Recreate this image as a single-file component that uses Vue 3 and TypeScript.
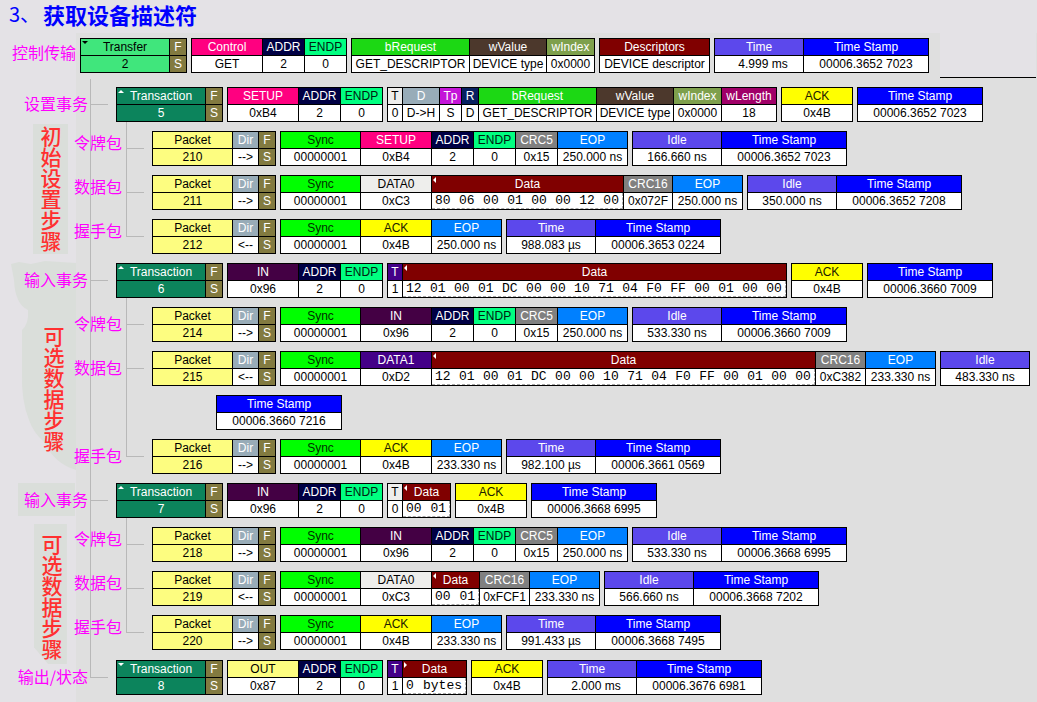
<script setup lang="ts">
interface Field {
  kind: string
  head: string
  value: string
  size?: string
  arrow?: string
}
type Block = Field[]
interface Packet {
  label: string
  blocks: Block[]
  more?: Block[]
}
interface Transaction {
  label: string
  shaded?: boolean
  step?: string
  place?: string
  blocks: Block[]
  packets: Packet[]
}

const heads: Record<string, string> = {
  flag: 'F', dir: 'Dir', sync: 'Sync', addr: 'ADDR', endp: 'ENDP', crc5: 'CRC5', crc16: 'CRC16',
  eop: 'EOP', ack: 'ACK', stamp: 'Time Stamp', time: 'Time', idle: 'Idle', setup: 'SETUP', in: 'IN',
  out: 'OUT', data0: 'DATA0', data1: 'DATA1', control: 'Control', request: 'bRequest',
  wvalue: 'wValue', windex: 'wIndex', wlength: 'wLength', desc: 'Descriptors', packet: 'Packet',
  transfer: 'Transfer', transaction: 'Transaction', t0: 'T', t1: 'T', d: 'D', tp: 'Tp', r: 'R', data: 'Data',
}

const arrows: Record<string, string> = {
  up: 'M0 4 L3 1 L6 4 Z',
  down: 'M0 1 L6 1 L3 4 Z',
  left: 'M0 3 L3 0 L3 6 Z',
  right: 'M0 0 L3 3 L0 6 Z',
}

const f = (kind: string, value: string, size?: string, arrow?: string): Field => ({
  kind, value, size, arrow, head: heads[kind],
})
const data = (value: string, size: string, arrow = 'left') => f('data', value, size, arrow)
const lead = (no: string, dir: string): Block => [f('packet', no), f('dir', dir), f('flag', 'S')]
const txn = (no: string, arrow = 'up'): Block => [f('transaction', no, '', arrow), f('flag', 'S')]
const addr = (kind: string, value: string): Block => [f(kind, value), f('addr', '2'), f('endp', '0')]
const sync = f('sync', '00000001')
const timing = (kind: string, value: string, stamp: string): Block => [f(kind, value), f('stamp', stamp)]
const request: Block = [f('request', 'GET_DESCRIPTOR'), f('wvalue', 'DEVICE type'), f('windex', '0x0000')]

const token = (label: string, no: string, pid: string, code: string, idle: string, stamp: string): Packet => ({
  label,
  blocks: [
    lead(no, '-->'),
    [sync, ...addr(pid, code), f('crc5', '0x15'), f('eop', '250.000 ns')],
    timing('idle', idle, stamp),
  ],
})
const handshake = (no: string, dir: string, eop: string, time: string, stamp: string): Packet => ({
  label: '握手包',
  blocks: [lead(no, dir), [sync, f('ack', '0x4B'), f('eop', eop)], timing('time', time, stamp)],
})

const longData = '12 01 00 01 DC 00 00 10 71 04 F0 FF 00 01 00 00'

const transfer: Block[] = [
  [f('transfer', '2', '', 'down'), f('flag', 'S')],
  addr('control', 'GET'),
  request,
  [f('desc', 'DEVICE descriptor')],
  timing('time', '4.999 ms', '00006.3652 7023'),
]

const transactions: Transaction[] = [
  {
    label: '设置事务',
    step: '初始设置步骤',
    place: 'first',
    blocks: [
      txn('5'),
      addr('setup', '0xB4'),
      [f('t0', '0'), f('d', 'D->H'), f('tp', 'S'), f('r', 'D'), ...request, f('wlength', '18')],
      [f('ack', '0x4B')],
      [f('stamp', '00006.3652 7023')],
    ],
    packets: [
      token('令牌包', '210', 'setup', '0xB4', '166.660 ns', '00006.3652 7023'),
      {
        label: '数据包',
        blocks: [
          lead('211', '-->'),
          [sync, f('data0', '0xC3'), data('80 06 00 01 00 00 12 00', 'mid'), f('crc16', '0x072F', 'tight'), f('eop', '250.000 ns')],
          timing('idle', '350.000 ns', '00006.3652 7208'),
        ],
      },
      handshake('212', '<--', '250.000 ns', '988.083 µs', '00006.3653 0224'),
    ],
  },
  {
    label: '输入事务',
    step: '可选数据步骤',
    place: 'second',
    blocks: [
      txn('6'),
      addr('in', '0x96'),
      [f('t1', '1'), data(longData, 'long')],
      [f('ack', '0x4B')],
      [f('stamp', '00006.3660 7009')],
    ],
    packets: [
      token('令牌包', '214', 'in', '0x96', '533.330 ns', '00006.3660 7009'),
      {
        label: '数据包',
        blocks: [
          lead('215', '<--'),
          [sync, f('data1', '0xD2'), data(longData, 'long'), f('crc16', '0xC382'), f('eop', '233.330 ns')],
          [f('idle', '483.330 ns')],
        ],
        more: [[f('stamp', '00006.3660 7216')]],
      },
      handshake('216', '-->', '233.330 ns', '982.100 µs', '00006.3661 0569'),
    ],
  },
  {
    label: '输入事务',
    shaded: true,
    step: '可选数据步骤',
    place: 'third',
    blocks: [
      txn('7'),
      addr('in', '0x96'),
      [f('t0', '0'), data('00 01', 'short')],
      [f('ack', '0x4B')],
      [f('stamp', '00006.3668 6995')],
    ],
    packets: [
      token('令牌包', '218', 'in', '0x96', '533.330 ns', '00006.3668 6995'),
      {
        label: '数据包',
        blocks: [
          lead('219', '<--'),
          [sync, f('data0', '0xC3'), data('00 01', 'short'), f('crc16', '0xFCF1'), f('eop', '233.330 ns')],
          timing('idle', '566.660 ns', '00006.3668 7202'),
        ],
      },
      handshake('220', '-->', '233.330 ns', '991.433 µs', '00006.3668 7495'),
    ],
  },
  {
    label: '输出/状态',
    blocks: [
      txn('8', 'down'),
      addr('out', '0x87'),
      [f('t1', '1'), data('0 bytes', 'bytes', 'right')],
      [f('ack', '0x4B')],
      timing('time', '2.000 ms', '00006.3676 6981'),
    ],
    packets: [],
  },
]
</script>

<template>
  <main class="page">
    <h1 class="title"><span class="number">3、</span>获取设备描述符</h1>

    <div class="row">
      <span class="label transfer-label">控制传输</span>
      <table v-for="(block, b) in transfer" :key="b" class="block">
        <thead>
          <tr>
            <th v-for="(c, i) in block" :key="i" scope="col" :class="['cell', c.kind, c.size]">
              <svg v-if="c.arrow" class="arrow" width="6" height="6" viewBox="0 0 6 6" aria-hidden="true"><path :d="arrows[c.arrow]" /></svg>{{ c.head }}
            </th>
          </tr>
        </thead>
        <tbody>
          <tr>
            <td v-for="(c, i) in block" :key="i" :class="['cell', c.kind + '-value', { late: c.value.endsWith(' ms') }]">{{ c.value }}</td>
          </tr>
        </tbody>
      </table>
      <span class="rule"></span>
    </div>

    <div class="tree">
      <section v-for="(t, n) in transactions" :key="n" :class="['transaction-group', t.place]">
        <svg v-if="t.place === 'second'" class="patch" width="65" height="210" viewBox="0 0 65 210" aria-hidden="true">
          <path d="M0 4 L8 2 L20 4 L34 1 L65 3 V210 Q44 204 33 182 Q22 172 18 160 Q10 140 11 112 L11 70 Q18 64 17 50 Q4 44 3 20 Z" />
        </svg>
        <div class="row">
          <span :class="['label', 'transaction-label', { shaded: t.shaded }]">{{ t.label }}</span>
          <i class="twig"></i>
          <table v-for="(block, b) in t.blocks" :key="b" class="block">
            <thead>
              <tr>
                <th v-for="(c, i) in block" :key="i" scope="col" :class="['cell', c.kind, c.size]">
                  <svg v-if="c.arrow" class="arrow" width="6" height="6" viewBox="0 0 6 6" aria-hidden="true"><path :d="arrows[c.arrow]" /></svg>{{ c.head }}
                </th>
              </tr>
            </thead>
            <tbody>
              <tr>
                <td v-for="(c, i) in block" :key="i" :class="['cell', c.kind + '-value', { late: c.value.endsWith(' ms') }]">
                  <div v-if="c.kind === 'data'" class="bytes-line"><span v-for="(x, k) in c.value.split(' ')" :key="k">{{ x }}</span></div>
                  <template v-else>{{ c.value }}</template>
                </td>
              </tr>
            </tbody>
          </table>
        </div>

        <div v-if="t.step" class="step">{{ t.step }}</div>

        <div v-if="t.packets.length" class="packets">
          <article v-for="(p, m) in t.packets" :key="m" class="packet-item">
            <div class="row">
              <span class="label packet-label">{{ p.label }}</span>
              <i class="twig"></i>
              <table v-for="(block, b) in p.blocks" :key="b" class="block">
                <thead>
                  <tr>
                    <th v-for="(c, i) in block" :key="i" scope="col" :class="['cell', c.kind, c.size]">
                      <svg v-if="c.arrow" class="arrow" width="6" height="6" viewBox="0 0 6 6" aria-hidden="true"><path :d="arrows[c.arrow]" /></svg>{{ c.head }}
                    </th>
                  </tr>
                </thead>
                <tbody>
                  <tr>
                    <td v-for="(c, i) in block" :key="i" :class="['cell', c.kind + '-value']">
                      <div v-if="c.kind === 'data'" class="bytes-line"><span v-for="(x, k) in c.value.split(' ')" :key="k">{{ x }}</span></div>
                      <template v-else>{{ c.value }}</template>
                    </td>
                  </tr>
                </tbody>
              </table>
            </div>
            <div v-if="p.more" class="row more">
              <table v-for="(block, b) in p.more" :key="b" class="block">
                <thead>
                  <tr><th v-for="(c, i) in block" :key="i" scope="col" :class="['cell', c.kind]">{{ c.head }}</th></tr>
                </thead>
                <tbody>
                  <tr><td v-for="(c, i) in block" :key="i" class="cell">{{ c.value }}</td></tr>
                </tbody>
              </table>
            </div>
          </article>
        </div>
      </section>
    </div>
  </main>
</template>

<style>
body {
  margin: 0;
  background: #e4e2e6;
}
</style>

<style scoped>
.page {
  box-sizing: border-box;
  min-height: 100vh;
  background: linear-gradient(#dfdfdf, #dfdfdf) 76px 33px no-repeat, #e4e2e6;
  font: 12px/16px "Liberation Sans", "Noto Sans CJK SC", sans-serif;
  color: #000;
}
.title {
  display: flex;
  align-items: center;
  box-sizing: border-box;
  height: 38px;
  margin: 0;
  padding: 0 0 10px 9px;
  font: bold 22px/28px "Noto Sans CJK SC", sans-serif;
  color: #0000ff;
}
.number {
  width: 34px;
  font-size: 20px;
  font-weight: normal;
}
.row {
  display: flex;
  gap: 4px;
}
.label {
  box-sizing: border-box;
  display: flex;
  flex: none;
  align-items: center;
  justify-content: flex-end;
  padding-bottom: 4px;
  white-space: nowrap;
  font: 16px/20px "Noto Sans CJK SC", sans-serif;
  color: #ff00ff;
}
.transfer-label {
  width: 76px;
  padding-bottom: 8px;
}
.transaction-label {
  width: 88px;
}
.packet-label {
  width: 50px;
}
.first .packet-label,
.third .packet-label {
  padding-bottom: 14px;
}
.shaded {
  background: linear-gradient(#dadeda, #dadeda) 18px 0 / 57px 33px no-repeat;
}
.rule {
  flex: 1;
  margin: -5px 1px -5px 7px;
  border-bottom: 1px solid #000;
  background: #e4e2e6;
}
.tree {
  position: relative;
  isolation: isolate;
  margin-top: 6px;
  padding-top: 8px;
}
.tree::before {
  content: "";
  position: absolute;
  z-index: -1;
  top: 0;
  bottom: 18px;
  left: 90px;
  width: 1px;
  background: #b8b8b8;
}
.twig {
  flex: none;
  align-self: center;
  width: 18px;
  height: 1px;
  margin: 0 4px 0 -2px;
  background: #b8b8b8;
}
.transaction-group {
  position: relative;
  display: grid;
  grid-template-columns: 72px 1fr;
  margin-bottom: 9px;
}
.transaction-group:last-child {
  margin-bottom: 0;
}
.third {
  margin-bottom: 10px;
}
.transaction-group > .row {
  grid-column: 1 / -1;
}
.patch {
  position: absolute;
  z-index: -2;
  top: -3px;
  left: 11px;
  fill: #dadeda;
}
.step {
  box-sizing: border-box;
  align-self: end;
  width: 35px;
  margin-left: 33px;
  padding: 2px 0;
  background: #dadeda;
  writing-mode: vertical-rl;
  font: 500 21px/35px "Noto Sans CJK SC", sans-serif;
  color: #ff3030;
}
.second .step {
  margin-left: 36px;
  padding-bottom: 22px;
  background: none;
}
.third .step {
  margin: 0 0 -14px 34px;
  padding: 10px 0 4px;
  clip-path: polygon(0 0, 94% 0, 94% 100%, 40% 100%, 0 88%);
}
.packets {
  position: relative;
}
.packets::before {
  content: "";
  position: absolute;
  top: 0;
  bottom: 17px;
  left: 54px;
  width: 1px;
  background: #b8b8b8;
}
.packet-item {
  padding-top: 9px;
}
.packet-item .twig {
  margin-left: 0;
}
.more {
  margin: 9px 0 0 144px;
}
.block {
  flex: none;
  border: solid #000;
  border-width: 1px 0 0 1px;
  border-spacing: 0;
}
.cell {
  position: relative;
  box-sizing: border-box;
  height: 17px;
  padding: 0;
  border: solid #000;
  border-width: 0 1px 1px 0;
  text-align: center;
  white-space: nowrap;
  font-weight: normal;
  line-height: 16px;
}
th.cell {
  color: #fff;
}
td.cell {
  background: #fff;
}
td.late {
  padding-left: 8px;
}
.arrow {
  position: absolute;
  top: 1px;
  left: 1px;
  fill: currentColor;
}
.bytes-line {
  box-sizing: border-box;
  display: flex;
  justify-content: space-between;
  height: 16px;
  padding: 0 3px;
  border: dashed #a8a8a8;
  border-width: 0 1px 1px 0;
  font: 13px/16px "Liberation Mono", monospace;
}
th.transfer, th.transaction { width: 89px; }
th.transfer, td.transfer-value { background: #40e67c; color: #000; }
th.transaction, td.transaction-value { background: #0c845c; color: #fff; }
th.flag { width: 17px; }
th.flag, td.flag-value { background: #827a40; color: #fff; }
th.packet { width: 80px; }
th.packet, td.packet-value { background: #fdfd80; color: #000; }
th.dir { width: 26px; background: #98acb8; }
th.sync { width: 80px; background: #00ff00; color: #003000; }
th.control, th.setup { width: 71px; background: #ff0080; }
th.in { width: 71px; background: #440044; }
th.out { width: 71px; background: #fdfd80; color: #000; }
th.data0 { width: 71px; background: #eeeeec; color: #000; }
th.data1 { width: 71px; background: #440088; }
th.ack { width: 71px; background: #ffff00; color: #202000; }
th.addr { width: 42px; background: #000044; }
th.endp { width: 42px; background: #00ff80; color: #002010; }
th.crc5 { width: 42px; background: #808080; }
th.crc16 { width: 50px; background: #808080; }
th.crc16.tight { width: 49px; }
th.eop { width: 70px; background: #0080ff; }
th.time, th.idle { width: 89px; background: #5c48ec; }
th.stamp { width: 125px; background: #0000ff; }
th.request { width: 118px; background: #1cd814; }
th.wvalue { width: 77px; background: #4c382c; }
th.windex { width: 48px; background: #7ea04c; }
th.wlength { width: 55px; background: #a00068; }
th.desc { width: 110px; background: #800000; }
th.t0 { width: 15px; background: #eeeeec; color: #000; }
th.t1 { width: 15px; background: #440088; }
th.d { width: 37px; background: #98acb8; }
th.tp { width: 22px; background: #c414d8; }
th.r { width: 17px; background: #082060; }
th.data { background: #800000; }
th.long { width: 384px; }
th.mid { width: 192px; }
th.short { width: 48px; }
th.bytes { width: 64px; }
</style>
